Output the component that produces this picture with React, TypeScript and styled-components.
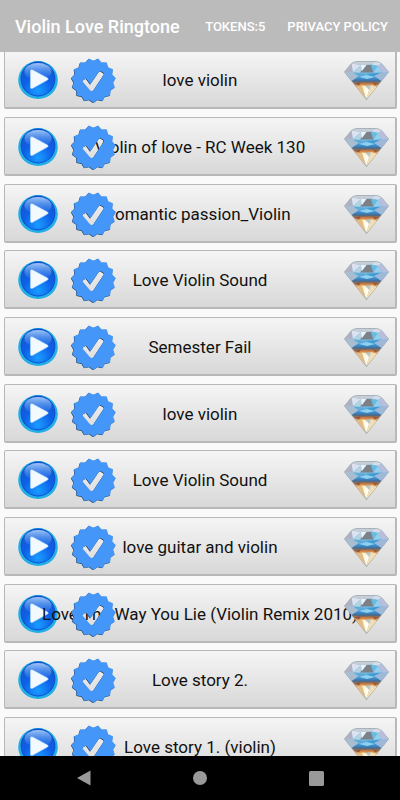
import React from 'react';
import styled, { createGlobalStyle } from 'styled-components';

const GlobalStyle = createGlobalStyle`
  *, *::before, *::after { box-sizing: border-box; }
  body { margin: 0; background: #fafafa; font-family: Roboto, sans-serif; }
  button { font-family: inherit; cursor: pointer; }
`;

const Screen = styled.div`
  display: flex;
  flex-direction: column;
  height: 100vh;
  overflow: hidden;
`;

const AppBar = styled.header`
  display: flex;
  flex: none;
  align-items: center;
  gap: 22px;
  height: 52px;
  padding: 0 12px 0 15px;
  background: #bbb;
  color: #fff;
`;

const Title = styled.h1`
  flex: 1;
  margin: 0;
  font-size: 18px;
  font-weight: 500;
  white-space: nowrap;
`;

const MenuButton = styled.button`
  padding: 0;
  border: 0;
  background: none;
  color: inherit;
  font-size: 13px;
  font-weight: 500;
  text-transform: uppercase;
  white-space: nowrap;
`;

const Viewport = styled.main`
  flex: 1;
  min-height: 0;
  overflow: hidden;
`;

const List = styled.ul`
  margin: -2px 0 0;
  padding: 0 3px 0 4px;
  list-style: none;
`;

const Row = styled.li`
  display: grid;
  grid-template-columns: 40px 45px 1fr 45px;
  column-gap: 13px;
  align-items: center;
  height: 59px;
  margin-bottom: 8px;
  padding: 2px 6px 0 13px;
  border: 1px solid #b8b8b8;
  border-right-width: 2px;
  border-bottom-width: 2px;
  border-radius: 2px;
  background: linear-gradient(#f5f5f5, #d8d8d8);
  &:nth-child(3n) { margin-bottom: 7px; }
`;

const IconButton = styled.button<{ $column: number }>`
  grid-row: 1;
  grid-column: ${(p) => p.$column};
  display: flex;
  padding: 0;
  border: 0;
  background: none;
  svg { display: block; width: 100%; height: auto; }
`;

const Name = styled.span`
  grid-row: 1;
  grid-column: 1 / -1;
  margin-right: 7px;
  color: #111;
  font-size: 17px;
  line-height: 20px;
  text-align: center;
  white-space: nowrap;
`;

const NavBar = styled.nav`
  display: grid;
  flex: none;
  grid-template-columns: repeat(3, 116px);
  justify-content: center;
  height: 44px;
  background: #000;
`;

const NavButton = styled.button`
  display: flex;
  align-items: center;
  justify-content: center;
  padding: 0;
  border: 0;
  background: none;
  color: #999;
`;

const songs = [
  'love violin',
  'Violin of love - RC Week 130',
  'romantic passion_Violin',
  'Love Violin Sound',
  'Semester Fail',
  'love violin',
  'Love Violin Sound',
  'love guitar and violin',
  'Love The Way You Lie (Violin Remix 2010)',
  'Love story 2.',
  'Love story 1. (violin)',
];

const TEETH = 15;
const sealPath =
  Array.from({ length: TEETH * 2 }, (_, i) => {
    const radius = i % 2 ? 19.8 : 22.4;
    const angle = Math.PI / 2 + (Math.PI * i) / TEETH;
    return `${i ? 'L' : 'M'}${(22.5 + radius * Math.cos(angle)).toFixed(2)} ${(22.5 + radius * Math.sin(angle)).toFixed(2)}`;
  }).join('') + 'Z';
const checkPath =
  'M11.8 23.8Q11.3 22.8 12.2 22.2L14.2 20.9Q15.2 20.4 15.8 21.3L19.4 26.3L28 13.8Q28.8 12.8 29.8 13.3L32.4 14.8Q33.5 15.5 32.9 16.5L22.7 32Q21 34 19 32.3Z';

const PlayIcon = () => (
  <svg viewBox="0 0 40 38" aria-hidden="true">
    <ellipse cx="20" cy="19" rx="19.8" ry="19" fill="#22aee8" />
    <circle cx="20" cy="18" r="17.4" fill="#0b4cc4" />
    <circle cx="20" cy="18" r="16.6" fill="url(#ball)" />
    <ellipse cx="20" cy="10.5" rx="13.5" ry="8.5" fill="url(#gloss)" />
    <path d="M12.5 10.2Q12.5 8 14.6 9L29.5 17Q31 18 29.5 19L14.6 27.3Q12.5 28.2 12.5 26.3Z" fill="#f2faff" stroke="#bcdcff" strokeWidth=".6" />
  </svg>
);

const SealIcon = () => (
  <svg viewBox="0 0 45 45" aria-hidden="true">
    <path d={sealPath + checkPath} transform="translate(-.4 .4)" fill="#1d3550" fillRule="evenodd" />
    <path d={sealPath + checkPath} fill="#4496f8" fillRule="evenodd" />
  </svg>
);

const DiamondIcon = () => (
  <svg viewBox="0 0 45 39" aria-hidden="true">
    <path d="M7.5 2.5Q10 .5 14 .5H31Q35 .5 37.5 2.5L44.5 11L22.5 38.6L.5 11Z" fill="url(#gem)" stroke="#8a8d94" strokeWidth=".6" />
    <path d="M7.5 2.5L9 11L.5 11Z" fill="#aeb2c2" />
    <path d="M7.5 2.5L17 4L9 11Z" fill="#dfe2ee" />
    <path d="M7.5 2.5Q10 .8 14 .8H31L27 3.5L17 4Z" fill="#c9cdd5" />
    <path d="M17 4L9 11.5H18L22 7Z" fill="#b3d3e0" />
    <path d="M22 4L16 11.5H29.5L27 4Z" fill="#7a8189" />
    <path d="M17 4H22.5L18 10Z" fill="#eef1f5" />
    <path d="M27 3.5L31 .8Q35 .8 37.5 2.5L34 5Z" fill="#d8dbe5" />
    <path d="M27 3.5L34 5L29.5 11.5Z" fill="#67bce0" />
    <path d="M34 5L38 11.5H29.5Z" fill="#98cdec" />
    <path d="M34 5L37.5 2.5L44.5 11H38Z" fill="#b9bfdb" />
    <path d="M.5 11H9L15 15L7.5 20Z" fill="#a9bdd1" />
    <path d="M9 11.5L22 13L16 16Z" fill="#5fabd9" />
    <path d="M22 13L38 11.5L30 16Z" fill="#409bd4" />
    <path d="M38 11H44.5L37.5 20L30 15Z" fill="#9eb9d8" />
    <path d="M15 16L22.5 14L31 16L23 18Z" fill="#8dd0f0" />
    <path d="M10 22.5L17 21L15 24.5Z" fill="#8d5940" />
    <path d="M28 21L35 22.5L31 24.5Z" fill="#975e3c" />
    <path d="M12.5 26L18 24.5L22.5 38Z" fill="#e3bd85" />
    <path d="M18 24.5L22.5 38L22 25Z" fill="#fff3cd" />
    <path d="M22 25L27 24L22.5 38Z" fill="#b5c8d2" />
    <path d="M27 24L32.5 26L22.5 38Z" fill="#f3dfb5" />
    <path d="M20 29L22.5 37L25 29L22.5 26Z" fill="#fffdf2" />
  </svg>
);

const Gradients = () => (
  <svg width="0" height="0" aria-hidden="true" display="block">
    <defs>
      <radialGradient id="ball" cx=".5" cy=".85" r=".75">
        <stop offset="0" stopColor="#1a9cff" />
        <stop offset=".6" stopColor="#0d5fe8" />
        <stop offset="1" stopColor="#1659cf" />
      </radialGradient>
      <linearGradient id="gloss" x2="0" y2="1">
        <stop offset="0" stopColor="#b5d8ff" stopOpacity=".85" />
        <stop offset="1" stopColor="#4a94f5" stopOpacity=".1" />
      </linearGradient>
      <linearGradient id="gem" x2="0" y2="1">
        <stop offset=".3" stopColor="#76bee8" />
        <stop offset=".44" stopColor="#3b8ed0" />
        <stop offset=".52" stopColor="#47698c" />
        <stop offset=".58" stopColor="#c9763b" />
        <stop offset=".68" stopColor="#f5cb87" />
        <stop offset="1" stopColor="#c9c9c9" />
      </linearGradient>
    </defs>
  </svg>
);

export default function App() {
  return (
    <Screen>
      <GlobalStyle />
      <Gradients />
      <AppBar>
        <Title>Violin Love Ringtone</Title>
        <MenuButton>Tokens:5</MenuButton>
        <MenuButton>Privacy policy</MenuButton>
      </AppBar>
      <Viewport>
        <List>
          {songs.map((song, i) => (
            <Row key={i}>
              <IconButton $column={1} aria-label={`Play ${song}`}><PlayIcon /></IconButton>
              <Name>{song}</Name>
              <IconButton $column={2} aria-label={`Set ${song}`}><SealIcon /></IconButton>
              <IconButton $column={4} aria-label={`Unlock ${song}`}><DiamondIcon /></IconButton>
            </Row>
          ))}
        </List>
      </Viewport>
      <NavBar>
        <NavButton aria-label="Back"><svg width="14" height="16"><path d="M0 8L13.5 .5V15.5Z" fill="currentColor" /></svg></NavButton>
        <NavButton aria-label="Home"><svg width="14" height="14"><circle cx="7" cy="7" r="7" fill="currentColor" /></svg></NavButton>
        <NavButton aria-label="Recent apps"><svg width="15" height="15"><rect width="15" height="15" rx="1.5" fill="currentColor" /></svg></NavButton>
      </NavBar>
    </Screen>
  );
}
